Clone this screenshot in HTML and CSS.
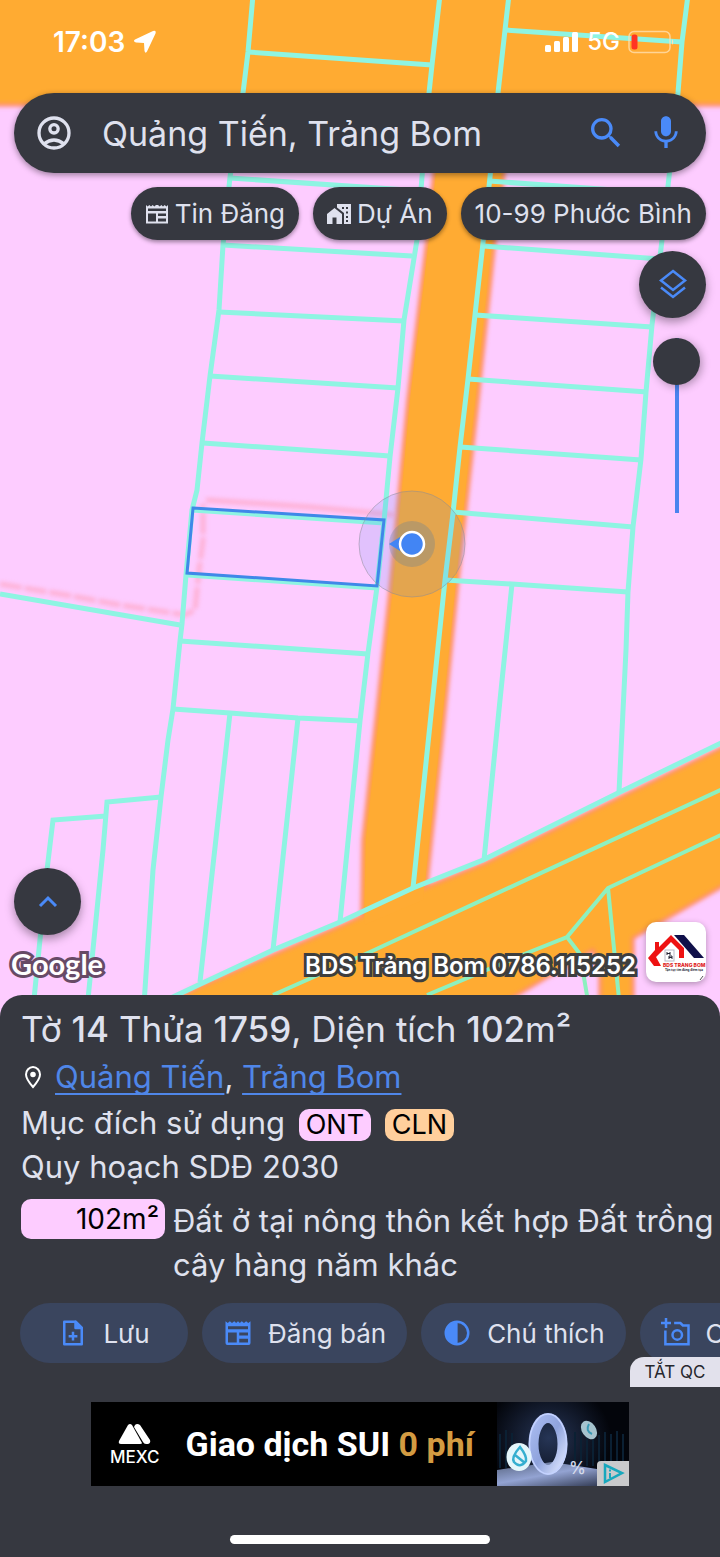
FILE: index.html
```html
<!DOCTYPE html>
<html lang="vi">

<head>
    <meta charset="UTF-8">
    <meta name="viewport" content="width=device-width, initial-scale=1">
    <title>Quảng Tiến, Trảng Bom</title>
    <link rel="stylesheet" href="styles.css">
</head>

<body>

    <main class="map">
        <svg class="map-canvas" viewBox="0 0 720 1019" preserveAspectRatio="xMidYMin slice" aria-hidden="true">
            <defs>
                <filter id="soft" x="-5%" y="-5%" width="110%" height="110%">
                    <feGaussianBlur stdDeviation="2" />
                </filter>
            </defs>
            <rect width="720" height="1019" fill="#fdccff" />

            <!-- roads -->
            <g fill="#ffab33" stroke="#ff8660" stroke-width="3" filter="url(#soft)">
                <path d="M-10-10H730V105H-10z" />
                <path d="M440 100L434 173L427 240L408 400L390 590L363 840L362 915L427 882L442 740L458 580L478 400L495 240L504 173L510 100z" />
                <path d="M730 744L620 797L483 864L413 892L340 926L200 986L120 1030H450L517 995L593 950L600 975V1030H633V938L730 882z" />
            </g>
            <path d="M442 95L436 173L429 240L410 400L393 590L366 840L364 925L423 900L425 882L440 740L456 580L475 400L492 240L501 173L507 95z" fill="#ffab33" />

            <!-- planning boundary -->
            <g fill="none" stroke="#ff9fb8" stroke-width="5" opacity=".6" filter="url(#soft)">
                <path d="M0 584L60 594L120 605L185 615L195 610L199 570L203 540V504" stroke-dasharray="22 3" />
                <path d="M206 500L310 507L395 515" />
            </g>

            <!-- parcels -->
            <g class="parcels">
                <path d="M253-5L248 52L243 93L230 177L223 245L219 310L210 376L202 443L197 490L192 510L186 575L182 624L180 641L173 709L168 740L161 797L153 870L143 1019" />
                <path d="M440-5L432 65L429 93L422 177L417 240L404 320L398 388L390 457L384 521L377 587L368 653L360 721L340 922" />
                <path d="M248 52L432 65M230 178L422 191M223 245L412 256M219 312L404 321M210 376L398 388M203 443L390 456M192 510L384 523M188 575L377 588M180 641L368 654M173 709L230 713L298 718L361 721" />
                <path d="M230 713L200 982M298 718L273 950" />
                <path d="M0 594L180 625M32 1019L47 870L53 820L106 816M161 797L107 802L103 850L86 1019" />
                <path d="M509-5L505 30L498 93L490 177L483 243L475 315L468 379L460 447L453 513L445 580L413 888" />
                <path d="M688-5L682 42L678 93L669 177L662 240L652 325L646 392L641 459L633 527L628 592L626 650L619 792" />
                <path d="M505 30L682 42M489 181L669 194M483 246L660 259M475 315L652 327M468 379L647 392M460 447L641 460M453 512L633 527M445 580L512 584L628 592" />
                <path d="M512 584L500 700L484 860" />
                <path d="M725 741L620 792L483 860L413 888L340 922L273 950L177 995L125 1019" />
                <path class="thin" d="M725 788L370 952L273 995M725 833L608 888L567 937L527 953L427 995M608 888L621 1019M567 937L580 954L591 1019" />
            </g>

            <path d="M193 508L384 520L377 586L187 573z" fill="none" stroke="#3f88e8" stroke-width="3" />

            <!-- current position -->
            <circle cx="412" cy="544" r="53" fill="#4285f4" fill-opacity=".15" stroke="#8b8b93" stroke-opacity=".5" />
            <circle cx="412" cy="544" r="23" fill="#5c7d9c" fill-opacity=".3" />
            <path d="M389 544L400 537V551z" fill="#4285f4" />
            <circle cx="412" cy="544" r="12" fill="#4285f4" stroke="#fff" stroke-width="2.5" />
        </svg>

        <div class="status-bar">
            <div class="status-time">
                <span>17:03</span>
                <svg width="24" height="24" viewBox="0 0 24 24"><path d="M2 9.5L20 1Q23.5 0 22.5 3.5L14 21.5Q12.5 24 11.5 21L11 13L3 12.5Q-.5 11.5 2 9.5z" fill="#fff" /></svg>
            </div>
            <div class="status-net">
                <svg width="34" height="22" viewBox="0 0 34 22" fill="#fff">
                    <rect x="0" y="14" width="6" height="7" rx="1.5" />
                    <rect x="9" y="10" width="6" height="11" rx="1.5" />
                    <rect x="18" y="6" width="6" height="15" rx="1.5" />
                    <rect x="27" y="1" width="6" height="20" rx="1.5" />
                </svg>
                <span>5G</span>
                <svg width="46" height="24" viewBox="0 0 46 24">
                    <rect x="1" y="1.5" width="41" height="21" rx="5" fill="none" stroke="#ffe3b8" stroke-opacity=".75" stroke-width="1.5" />
                    <path d="M44 9Q46.5 12 44 15z" fill="#ffe3b8" />
                    <rect x="3.5" y="4.5" width="6" height="15" rx="2.5" fill="#ff3422" />
                </svg>
            </div>
        </div>

        <form class="search" role="search">
            <button class="icon-btn" type="button" aria-label="Tài khoản">
                <svg width="40" height="40" viewBox="0 0 24 24" fill="none" stroke="#dfe1ee" stroke-width="2">
                    <circle cx="12" cy="12" r="9" />
                    <circle cx="12" cy="9.5" r="2.5" />
                    <path d="M6 18.5Q12 13.8 18 18.5" />
                </svg>
            </button>
            <input class="search-input" type="text" value="Quảng Tiến, Trảng Bom" aria-label="Tìm kiếm">
            <button class="icon-btn" type="submit" aria-label="Tìm">
                <svg width="40" height="40" viewBox="0 0 24 24" fill="#4a8af8"><path d="M15.5 14h-.79l-.28-.27A6.471 6.471 0 0 0 16 9.5 6.5 6.5 0 1 0 9.5 16c1.61 0 3.09-.59 4.23-1.57l.27.28v.79l5 4.99L20.49 19l-4.99-5zm-6 0C7.01 14 5 11.99 5 9.5S7.01 5 9.5 5 14 7.01 14 9.5 11.99 14 9.5 14z" /></svg>
            </button>
            <button class="icon-btn" type="button" aria-label="Giọng nói">
                <svg width="40" height="40" viewBox="0 0 24 24" fill="#4a8af8"><path d="M12 14c1.66 0 3-1.34 3-3V5c0-1.66-1.34-3-3-3S9 3.34 9 5v6c0 1.66 1.34 3 3 3zm5.3-3c0 3-2.54 5.1-5.3 5.1S6.7 14 6.7 11H5c0 3.41 2.72 6.23 6 6.72V21h2v-3.28c3.28-.48 6-3.3 6-6.72h-1.7z" /></svg>
            </button>
        </form>

        <div class="chips">
            <button class="chip" type="button">
                <svg width="24" height="24" viewBox="0 0 24 24" fill="#dfe1ee"><path d="M1 3L2.7 4.5L4.3 3L6 4.5L7.7 3L9.3 4.5L11 3h2L14.7 4.5L16.3 3L18 4.5L19.7 3L21.3 4.5L23 3V21.5H1zM3 6.5V9H21V6.5zM3 11.5V19.5H11V11.5zM13 11.5V14H21V11.5zM13 16.5V19.5H21V16.5z" fill-rule="evenodd" /></svg>
                Tin Đăng
            </button>
            <button class="chip" type="button">
                <svg width="24" height="24" viewBox="0 0 24 24" fill="#dfe1ee" fill-rule="evenodd"><path d="M0 12L7.5 6L15 12V22H9.5V15.5H5.5V22H0zM10 2H24V22H17V11L10 5.5zM17 5V7H15V5zM21 5V7H19V5zM21 9.5V11.5H19V9.5zM21 14V16H19V14zM21 18V20H19V18z" /></svg>
                Dự Án
            </button>
            <button class="chip" type="button">10-99 Phước Bình</button>
        </div>

        <div class="side-tools">
            <button class="round-btn" type="button" aria-label="Lớp bản đồ">
                <svg width="32" height="32" viewBox="0 0 32 32" fill="none" stroke="#4a8af8" stroke-width="2.5">
                    <path d="M16 2L28 11.5L16 21L4 11.5zM4 18.5L16 28L28 18.5" />
                </svg>
            </button>
            <input class="opacity-slider" type="range" min="0" max="100" value="0" aria-label="Độ mờ lớp">
        </div>

        <div class="map-bottom">
            <div class="map-left">
                <button class="round-btn" type="button" aria-label="Mở rộng">
                    <svg width="24" height="24" viewBox="0 0 24 24" fill="none" stroke="#4a8af8" stroke-width="3"><path d="M4 16L12 8L20 16" /></svg>
                </button>
                <span class="google">Google</span>
            </div>
            <div class="agent">
                <span class="agent-name">BDS Trảng Bom 0786.115252</span>
                <div class="agent-logo">
                    <svg width="60" height="60" viewBox="0 0 60 60">
                        <path d="M28 13H38L58 36H48z" fill="#10104a" />
                        <path d="M2 36L9 28V20H13V25L25 13L38 26V36H33V28L25 20L10 35L15 44H8z" fill="#ee1212" />
                        <rect x="19" y="28" width="9" height="11" fill="#fff" stroke="#b9b9c6" />
                        <path d="M21 30V33M21 31.5H24M24 30V33M23 37V34H26V37M23 35.5H26" fill="none" stroke="#223" />
                        <text x="17" y="45" class="logo-name">BDS TRẢNG BOM</text>
                        <text x="19" y="49" class="logo-tag">Tận tụy tìm đúng điểm tựa</text>
                        <path d="M54 58L57 54" stroke="#555" />
                    </svg>
                </div>
            </div>
        </div>
    </main>

    <section class="panel">
        <div class="details">
            <h1 class="title">Tờ <b>14</b> Thửa <b>1759</b>, Diện tích <b>102</b>m²</h1>
            <p class="place">
                <svg width="24" height="24" viewBox="0 0 24 24" fill="none" stroke="#fff" stroke-width="2"><path d="M12 22Q5 14 5 9.5A7 7.5 0 0 1 19 9.5Q19 14 12 22z" /><circle cx="12" cy="9.5" r="1.8" fill="#fff" /></svg>
                <span><a href="#">Quảng Tiến</a>, <a href="#">Trảng Bom</a></span>
            </p>
            <p class="usage">Mục đích sử dụng <span class="tag tag-ont">ONT</span> <span class="tag tag-cln">CLN</span></p>
            <p class="plan">Quy hoạch SDĐ 2030</p>
            <div class="zone">
                <span class="zone-area">102m²</span>
                <span class="zone-name">Đất ở tại nông thôn kết hợp Đất trồng cây hàng năm khác</span>
            </div>
        </div>

        <div class="actions">
            <button class="action" type="button">
                <svg width="30" height="30" viewBox="0 0 24 24" fill="none" stroke="#4a8af8" stroke-width="2" stroke-linejoin="round"><path d="M5 3H14L19 8V21H5zM12 11V18M8.5 14.5H15.5" /><path d="M14 3V8H19z" fill="#4a8af8" /></svg>
                Lưu
            </button>
            <button class="action" type="button">
                <svg width="30" height="30" viewBox="0 0 24 24" fill="#4a8af8"><path d="M2 2.5L3.8 4L5.5 2.5L7.2 4L9 2.5L10.5 4L12 2.5L13.5 4L15 2.5L16.8 4L18.5 2.5L20.2 4L22 2.5V20Q22 21.5 20.5 21.5H3.5Q2 21.5 2 20zM4 6.5V9H20V6.5zM4 11.5V19.5H11V11.5zM13 11.5V14H20V11.5zM13 16.5V19.5H20V16.5z" fill-rule="evenodd" /></svg>
                Đăng bán
            </button>
            <button class="action" type="button">
                <svg width="30" height="30" viewBox="0 0 24 24"><circle cx="12" cy="12" r="9" fill="none" stroke="#4a8af8" stroke-width="2" /><path d="M12.5 3A9 9 0 0 0 12.5 21z" fill="#4a8af8" /></svg>
                Chú thích
            </button>
            <button class="action action-photo" type="button">
                <svg width="30" height="30" viewBox="0 0 24 24" fill="none" stroke="#4a8af8" stroke-width="2"><path d="M4 0V8M0 4H8M3.5 10V21H22V6H17.5L15.5 4H10.5" /><circle cx="13" cy="13.5" r="3.8" /></svg>
                C
            </button>
        </div>

        <div class="ad-area">
            <button class="ad-off" type="button">TẮT QC</button>
            <a class="ad" href="#">
                <span class="mexc">
                    <svg width="34" height="22" viewBox="0 0 34 22" fill="#fff">
                        <path d="M10 2Q12 0 14 2L24 20Q24 21 22 21H3Q0 21 1 18z" />
                        <path d="M17 2Q19 0 22 2L32 17Q33 20 30 21H28Q26 21 25 19L16 4z" />
                    </svg>
                    MEXC
                </span>
                <span class="ad-text">Giao dịch SUI <em>0 phí</em></span>
                <svg class="ad-art" viewBox="0 0 132 84" aria-hidden="true">
                    <defs>
                        <radialGradient id="glow">
                            <stop offset="0" stop-color="#263556" />
                            <stop offset="1" stop-color="#03050b" />
                        </radialGradient>
                        <linearGradient id="floor" x2="1" y2="1">
                            <stop offset="0" stop-color="#54617c" />
                            <stop offset=".45" stop-color="#93a3d2" />
                            <stop offset="1" stop-color="#1a2135" />
                        </linearGradient>
                        <linearGradient id="glass" x2="1" y2="1">
                            <stop offset="0" stop-color="#a9bbf0" />
                            <stop offset=".5" stop-color="#8fa3dc" />
                            <stop offset="1" stop-color="#dbe4ff" />
                        </linearGradient>
                    </defs>
                    <rect width="132" height="84" fill="#03050b" />
                    <ellipse cx="52" cy="36" rx="62" ry="56" fill="url(#glow)" />
                    <path d="M3 32V66M9 28V66M15 31V66M78 30V66M84 28V64M90 32V64M96 28V64M102 33V62M108 30V60M114 32V60M120 29V60M126 32V60" stroke="#0b2033" stroke-width="2" />
                    <path d="M0 68L55 60L132 72V84H0z" fill="url(#floor)" />
                    <ellipse cx="51" cy="42" rx="14.5" ry="26" fill="none" stroke="url(#glass)" stroke-width="10" />
                    <ellipse cx="51" cy="42" rx="18.5" ry="30" fill="none" stroke="#c4d2ff" stroke-width="1.5" />
                    <ellipse cx="22" cy="55" rx="12.5" ry="14" fill="#e4f6fb" />
                    <path d="M23 45Q14 55 17 60Q23 67 29 59Q30 54 23 45zM18 53L28 61" fill="none" stroke="#35afd0" stroke-width="2.5" />
                    <ellipse cx="92" cy="28" rx="7" ry="10" transform="rotate(-35 92 28)" fill="#a5c3cf" />
                    <path d="M92 22Q88 29 95 32" fill="none" stroke="#3999b5" stroke-width="2" />
                    <text x="72" y="72" class="percent">%</text>
                    <path d="M100 84V63Q100 59 104 59H132V84z" fill="#c9cacc" />
                    <path d="M108 63L125 71L108 80z" fill="none" stroke="#18a8bd" stroke-width="2.5" />
                    <path d="M113 71V76M113 67.5V69.5" stroke="#18a8bd" stroke-width="2" />
                </svg>
            </a>
        </div>
        <div class="home-bar"></div>
    </section>

</body>

</html>
```
FILE: styles.css
```css
* {
    box-sizing: border-box;
}

body {
    margin: 0;
    min-height: 100vh;
    display: flex;
    flex-direction: column;
    background-color: #363840;
    color: #dfe1ee;
    font-family: Inter, "Liberation Sans", sans-serif;
    overflow-x: hidden;
}

button,
input {
    margin: 0;
    padding: 0;
    border: none;
    background: none;
    color: inherit;
    font-family: inherit;
}

button {
    cursor: pointer;
}

svg {
    display: block;
    flex-shrink: 0;
}

/* map */
.map {
    position: relative;
    z-index: 0;
    flex: 1;
    display: flex;
    flex-direction: column;
    padding: 0 14px 37px;
}

.map-canvas {
    position: absolute;
    inset: 0;
    z-index: -1;
    width: 100%;
    height: 100%;
}

.parcels {
    fill: none;
    stroke: #8ef4e2;
    stroke-width: 5;
}

.parcels .thin {
    stroke: #8df0bf;
    stroke-width: 4;
}

.status-bar {
    display: flex;
    justify-content: space-between;
    align-items: center;
    height: 83px;
    margin-bottom: 10px;
    padding: 0 32px 0 39px;
    color: #fff;
}

.status-time,
.status-net {
    display: flex;
    align-items: center;
    gap: 8px;
}

.status-time {
    font-size: 28px;
    font-weight: 600;
}

.status-net {
    font-size: 24px;
    font-weight: 500;
}

.search {
    display: flex;
    align-items: center;
    height: 80px;
    padding: 0 20px;
    border-radius: 40px;
    background-color: #363840;
    box-shadow: 0 2px 6px rgba(0, 0, 0, .4);
}

.icon-btn {
    flex-shrink: 0;
}

.icon-btn + .icon-btn {
    margin-left: 20px;
}

.search-input {
    flex: 1;
    min-width: 0;
    margin-left: 28px;
    font-size: 34px;
    font-weight: 400;
    outline: none;
}

.chips {
    display: flex;
    justify-content: flex-end;
    gap: 14px;
    margin-top: 14px;
}

.chip {
    display: flex;
    align-items: center;
    gap: 6px;
    height: 53px;
    padding: 0 14px;
    border-radius: 27px;
    background-color: #363840;
    box-shadow: 0 2px 4px rgba(0, 0, 0, .4);
    font-size: 26px;
    white-space: nowrap;
}

.side-tools {
    display: flex;
    flex-direction: column;
    align-items: flex-end;
    gap: 20px;
    margin-top: 11px;
}

.round-btn {
    display: flex;
    align-items: center;
    justify-content: center;
    width: 67px;
    height: 67px;
    border-radius: 50%;
    background-color: #363840;
    box-shadow: 0 4px 10px rgba(0, 0, 0, .35);
}

.opacity-slider {
    appearance: none;
    writing-mode: vertical-lr;
    width: 47px;
    height: 175px;
    margin-right: 6px;
}

.opacity-slider::-webkit-slider-runnable-track {
    width: 47px;
    height: 175px;
    background: linear-gradient(#4a83ee, #4a83ee) center / 4px 100% no-repeat;
}

.opacity-slider::-webkit-slider-thumb {
    appearance: none;
    width: 47px;
    height: 47px;
    border-radius: 50%;
    background-color: #363840;
    box-shadow: 2px 2px 8px rgba(0, 0, 0, .3);
}

.map-bottom {
    display: flex;
    justify-content: space-between;
    align-items: flex-end;
    margin-top: auto;
}

.google {
    display: block;
    margin: 11px 0 0 -3px;
    color: #fff;
    font-family: Lato, sans-serif;
    font-size: 29px;
    font-weight: 700;
    line-height: 36px;
    -webkit-text-stroke: 6px #674a66;
    paint-order: stroke fill;
}

.agent {
    display: flex;
    align-items: flex-end;
    gap: 10px;
}

.agent-name {
    color: #fff;
    font-size: 24px;
    font-weight: 600;
    line-height: 32px;
    -webkit-text-stroke: 6px #3e3e3e;
    paint-order: stroke fill;
}

.agent-logo {
    border-radius: 10px;
    background-color: #fff;
    box-shadow: 0 2px 6px rgba(0, 0, 0, .3);
}

.logo-name {
    fill: #e01b1b;
    font-size: 5px;
    font-weight: 800;
}

.logo-tag {
    fill: #223;
    font-size: 3px;
    font-weight: 700;
}

/* land details */
.panel {
    position: relative;
    z-index: 1;
    display: flex;
    flex-direction: column;
    margin-top: -24px;
    padding-bottom: 13px;
    border-radius: 22px 22px 0 0;
    background-color: #363840;
}

.details {
    padding: 10px 0 0 21px;
    font-size: 31px;
    line-height: 44px;
}

.details p {
    margin: 0;
}

.title {
    margin: 0;
    font-size: 35px;
    font-weight: 400;
    line-height: 48px;
}

.title b {
    font-weight: 500;
}

.place {
    display: flex;
    align-items: center;
    gap: 10px;
    line-height: 48px;
}

.place a {
    color: #4f86e8;
    text-decoration-thickness: 2px;
    text-underline-offset: 5px;
    text-decoration-skip-ink: none;
}

.tag {
    display: inline-block;
    margin-left: 5px;
    padding: 0 7px;
    border-radius: 10px;
    color: #000;
    font-size: 27px;
    line-height: 32px;
}

.tag-ont {
    background-color: #fdccff;
}

.tag-cln {
    background-color: #ffcf9c;
}

.zone {
    display: flex;
    align-items: flex-start;
    gap: 8px;
    margin-top: 10px;
}

.zone-area {
    flex: 0 0 144px;
    padding-right: 6px;
    border-radius: 10px;
    background-color: #fdccff;
    color: #000;
    font-size: 28px;
    line-height: 40px;
    text-align: right;
}

.actions {
    display: flex;
    gap: 14px;
    margin-top: 16px;
    padding-left: 20px;
    overflow: hidden;
}

.action {
    display: flex;
    flex-shrink: 0;
    align-items: center;
    justify-content: center;
    gap: 15px;
    min-width: 168px;
    height: 60px;
    padding: 0 21px;
    border-radius: 30px;
    background-color: #3a455e;
    font-size: 26px;
    white-space: nowrap;
}

.action-photo {
    justify-content: flex-start;
}

.ad-area {
    position: relative;
    padding-top: 39px;
}

.ad-off {
    position: absolute;
    top: -6px;
    right: 0;
    width: 90px;
    height: 30px;
    border-radius: 14px 0 0 0;
    background-color: #e2e1ec;
    color: #26272e;
    font-size: 17px;
}

.ad {
    display: flex;
    align-items: center;
    width: 538px;
    max-width: 100%;
    height: 84px;
    margin: 0 auto;
    background-color: #000;
    color: #fff;
    text-decoration: none;
    overflow: hidden;
}

.mexc {
    display: flex;
    flex-direction: column;
    align-items: center;
    gap: 4px;
    margin-left: 19px;
    font-size: 17px;
    font-weight: 500;
    line-height: 16px;
}

.ad-text {
    flex: 1;
    margin-left: 26px;
    font-family: Roboto, sans-serif;
    font-size: 34px;
    font-weight: 700;
    white-space: nowrap;
}

.ad-text em {
    color: #d39b42;
    font-style: normal;
}

.ad-art {
    width: 132px;
    height: 84px;
}

.percent {
    fill: #d5dbea;
    font-size: 17px;
    font-weight: 500;
}

.home-bar {
    width: 36%;
    height: 9px;
    margin: 49px auto 0;
    border-radius: 5px;
    background-color: #fff;
}
```
